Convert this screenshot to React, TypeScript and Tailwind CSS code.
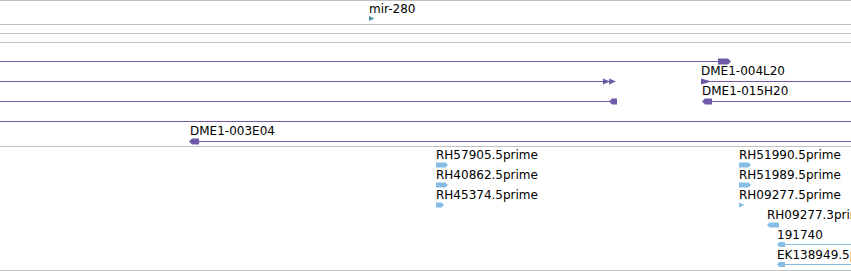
import React from "react";

const PURPLE = "#6e5aa8";
const BLUE = "#86bde5";
const TEAL = "#4a92a6";

type Label = { x: number; y: number; text: string };

function Labels({ items }: { items: Label[] }) {
  return (
    <>
      {items.map((l, i) => (
        <div
          key={i}
          className="absolute whitespace-nowrap text-[12px] leading-[14px] text-black"
          style={{ left: l.x, top: l.y }}
        >
          {l.text}
        </div>
      ))}
    </>
  );
}

// arrowhead helpers
const right = (x0: number, x1: number, c: number, h: number) =>
  `${x0},${c - h} ${x1 - h},${c - h} ${x1},${c} ${x1 - h},${c + h} ${x0},${c + h}`;
const left = (x0: number, x1: number, c: number, h: number) =>
  `${x1},${c - h} ${x0 + h},${c - h} ${x0},${c} ${x0 + h},${c + h} ${x1},${c + h}`;

export default function App() {
  return (
    <div
      className="w-[851px] h-[271px] overflow-hidden bg-white border-t border-[#c0c0c0]"
      style={{ fontFamily: '"DejaVu Sans", "Liberation Sans", sans-serif' }}
    >
      {/* track 1 */}
      <div className="relative h-[23px] border-b border-[#c0c0c0] box-content">
        <svg className="absolute inset-0" width={851} height={23}>
          <polygon points={`369,15 374.5,17.5 369,20`} fill={TEAL} />
        </svg>
        <Labels items={[{ x: 369, y: 1, text: "mir-280" }]} />
      </div>
      {/* track 2 */}
      <div className="h-[8px] border-b border-[#c0c0c0] box-content" />
      {/* track 3 */}
      <div className="h-[8px] border-b border-[#c0c0c0] box-content" />
      {/* track 4 */}
      <div className="relative h-[103px] border-b border-[#c0c0c0] box-content">
        <svg className="absolute inset-0" width={851} height={103}>
          <g fill={PURPLE} stroke="none">
            {/* row y=18 */}
            <rect x={0} y={18} width={720} height={1} />
            <polygon points={right(718, 731, 18.5, 3)} />
            {/* row y=38 */}
            <rect x={0} y={38} width={606} height={1} />
            <polygon points={`603,35.5 610,38.5 603,41.5`} />
            <polygon points={`609,35.5 616,38.5 609,41.5`} />
            <polygon points={`701,35.5 710,38 710,39 701,41.5`} />
            <rect x={705} y={38} width={146} height={1} />
            {/* row y=58 */}
            <rect x={0} y={58} width={612} height={1} />
            <polygon points={left(609, 617, 58.5, 3)} />
            <polygon points={left(702, 712, 58.5, 3)} />
            <rect x={710} y={58} width={141} height={1} />
            {/* row y=78 */}
            <rect x={0} y={78} width={851} height={1} />
            {/* row y=98 */}
            <polygon points={left(189, 199, 98.5, 3)} />
            <rect x={196} y={98} width={655} height={1} />
          </g>
        </svg>
        <Labels
          items={[
            { x: 701, y: 21, text: "DME1-004L20" },
            { x: 702, y: 41, text: "DME1-015H20" },
            { x: 190, y: 81, text: "DME1-003E04" },
          ]}
        />
      </div>
      {/* track 5 */}
      <div className="relative h-[123px] border-b border-[#c0c0c0] box-content">
        <svg className="absolute inset-0" width={851} height={123}>
          <g fill={BLUE} stroke="none">
            <polygon points={right(436, 448, 18, 2.5)} />
            <polygon points={right(436, 448, 38, 2.5)} />
            <polygon points={right(436, 444, 58, 2.5)} />
            <polygon points={right(739, 751, 18, 2.5)} />
            <polygon points={right(739, 751, 38, 2.5)} />
            <polygon points={`739,55.5 744.5,58 739,60.5`} />
            <polygon points={left(767, 779, 78, 2.5)} />
            <polygon points={left(777, 785, 97.5, 2.5)} />
            <rect x={780} y={97} width={71} height={1} />
            <polygon points={left(777, 785, 117.5, 2.5)} />
            <rect x={780} y={117} width={71} height={1} />
          </g>
        </svg>
        <Labels
          items={[
            { x: 436, y: 1, text: "RH57905.5prime" },
            { x: 436, y: 21, text: "RH40862.5prime" },
            { x: 436, y: 41, text: "RH45374.5prime" },
            { x: 739, y: 1, text: "RH51990.5prime" },
            { x: 739, y: 21, text: "RH51989.5prime" },
            { x: 739, y: 41, text: "RH09277.5prime" },
            { x: 767, y: 61, text: "RH09277.3prime" },
            { x: 777, y: 81, text: "191740" },
            { x: 777, y: 101, text: "EK138949.5prime" },
          ]}
        />
      </div>
    </div>
  );
}
